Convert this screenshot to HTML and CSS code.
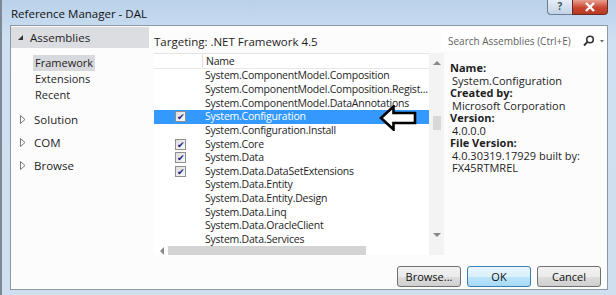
FILE: index.html
```html
<!DOCTYPE html>
<html lang="en">
<head>
    <meta charset="UTF-8">
    <title>Reference Manager - DAL</title>
    <link rel="stylesheet" href="styles.css">
</head>
<body>
    <div class="window">
        <div class="titlebar">
            <span class="title">Reference Manager - DAL</span>
            <div class="caption-buttons">
                <span class="btn-help">?</span>
                <span class="btn-close">
                    <svg width="14" height="10" viewBox="0 0 14 10"><path d="M3 1 L11 9 M11 1 L3 9" stroke="#fff" stroke-width="2.4"/></svg>
                </span>
            </div>
        </div>

        <div class="client">
            <div class="nav">
                <div class="nav-head"><span class="tri-open"></span>Assemblies</div>
                <div class="nav-sub">
                    <div class="nav-item selected">Framework</div>
                    <div class="nav-item">Extensions</div>
                    <div class="nav-item">Recent</div>
                </div>
                <div class="nav-group">
                    <svg class="tri-closed" width="6" height="9" viewBox="0 0 6 9"><path d="M0.5 0.5 L5 4.5 L0.5 8.5 Z" fill="#fff" stroke="#777"/></svg>Solution
                </div>
                <div class="nav-group">
                    <svg class="tri-closed" width="6" height="9" viewBox="0 0 6 9"><path d="M0.5 0.5 L5 4.5 L0.5 8.5 Z" fill="#fff" stroke="#777"/></svg>COM
                </div>
                <div class="nav-group">
                    <svg class="tri-closed" width="6" height="9" viewBox="0 0 6 9"><path d="M0.5 0.5 L5 4.5 L0.5 8.5 Z" fill="#fff" stroke="#777"/></svg>Browse
                </div>
            </div>

            <div class="main">
                <div class="top-row">
                    <span class="targeting">Targeting: .NET Framework 4.5</span>
                    <div class="search">
                        <span class="search-text">Search Assemblies (Ctrl+E)</span>
                        <svg width="26" height="12" viewBox="0 0 26 12">
                            <circle cx="9" cy="4.5" r="3.3" fill="none" stroke="#333" stroke-width="1.6"/>
                            <path d="M6.6 6.9 L3 10.5" stroke="#333" stroke-width="2"/>
                            <path d="M19 5 L23 5 L21 7.5 Z" fill="#666"/>
                        </svg>
                    </div>
                </div>

                <div class="middle">
                    <div class="list">
                        <div class="list-body">
                            <div class="list-head">
                                <span class="col-check"></span>
                                <span class="col-name">Name</span>
                            </div>
                            <div class="rows">
                                <div class="row"><span class="col-check"></span><span class="col-name">System.ComponentModel.Composition</span></div>
                                <div class="row"><span class="col-check"></span><span class="col-name">System.ComponentModel.Composition.Regist...</span></div>
                                <div class="row"><span class="col-check"></span><span class="col-name">System.ComponentModel.DataAnnotations</span></div>
                                <div class="row active"><span class="col-check"><span class="box">&#10004;</span></span><span class="col-name">System.Configuration</span></div>
                                <div class="row"><span class="col-check"></span><span class="col-name">System.Configuration.Install</span></div>
                                <div class="row"><span class="col-check"><span class="box">&#10004;</span></span><span class="col-name">System.Core</span></div>
                                <div class="row"><span class="col-check"><span class="box">&#10004;</span></span><span class="col-name">System.Data</span></div>
                                <div class="row"><span class="col-check"><span class="box">&#10004;</span></span><span class="col-name">System.Data.DataSetExtensions</span></div>
                                <div class="row"><span class="col-check"></span><span class="col-name">System.Data.Entity</span></div>
                                <div class="row"><span class="col-check"></span><span class="col-name">System.Data.Entity.Design</span></div>
                                <div class="row"><span class="col-check"></span><span class="col-name">System.Data.Linq</span></div>
                                <div class="row"><span class="col-check"></span><span class="col-name">System.Data.OracleClient</span></div>
                                <div class="row"><span class="col-check"></span><span class="col-name">System.Data.Services</span></div>
                            </div>
                            <div class="hscroll">
                                <span class="arrow-left"></span>
                                <span class="hthumb"></span>
                            </div>
                        </div>
                        <div class="vscroll">
                            <span class="arrow-up"></span>
                            <span class="vthumb"></span>
                            <span class="arrow-down"></span>
                        </div>

                        <!-- annotation arrow drawn over the list -->
                        <svg class="pointer" width="38" height="26" viewBox="0 0 38 26">
                            <path d="M2 13 L14.5 1.5 L14.5 8 L36 8 L36 18 L14.5 18 L14.5 24.5 Z" fill="#fff" stroke="#000" stroke-width="2.6" stroke-linejoin="miter"/>
                        </svg>
                    </div>

                    <div class="details">
                        <div class="d-label">Name:</div>
                        <div class="d-value">System.Configuration</div>
                        <div class="d-label">Created by:</div>
                        <div class="d-value">Microsoft Corporation</div>
                        <div class="d-label">Version:</div>
                        <div class="d-value">4.0.0.0</div>
                        <div class="d-label">File Version:</div>
                        <div class="d-value">4.0.30319.17929 built by:</div>
                        <div class="d-value">FX45RTMREL</div>
                    </div>
                </div>

                <div class="buttons">
                    <button>Browse...</button>
                    <button class="default">OK</button>
                    <button>Cancel</button>
                </div>
            </div>
        </div>
    </div>
</body>
</html>
```

FILE: styles.css
```css
body {
    margin: 0;
    font-family: "Open Sans", "Noto Sans", sans-serif;
    font-size: 11px;
    color: #1e1e1e;
    background: #c9dbef;
}

.window {
    width: 616px;
    height: 295px;
    box-sizing: border-box;
    border-left: 2px solid #7d8894;
    background: linear-gradient(to bottom, #b9d1ea 0, #cfe0f2 40px, #cfdff0 100%);
    display: flex;
    flex-direction: column;
}

.titlebar {
    height: 25px;
    display: flex;
    justify-content: space-between;
    align-items: flex-start;
    flex-shrink: 0;
}

.title {
    margin: 6px 0 0 9px;
    font-size: 11.5px;
    color: #111;
}

.caption-buttons {
    display: flex;
    margin-right: 8px;
}

.btn-help {
    width: 25px;
    height: 15px;
    box-sizing: border-box;
    border: 1px solid #6f7f92;
    border-right: none;
    border-top: none;
    border-radius: 0 0 0 4px;
    background: linear-gradient(to bottom, #e6eef7, #c3d3e6);
    text-align: center;
    font-size: 10px;
    font-weight: bold;
    line-height: 13px;
    color: #44505c;
}

.btn-close {
    width: 36px;
    height: 15px;
    box-sizing: border-box;
    border: 1px solid #6b2b24;
    border-top: none;
    border-radius: 0 0 4px 0;
    background: linear-gradient(to bottom, #e8a091, #c9452f 55%, #b83a24);
    display: flex;
    align-items: center;
    justify-content: center;
}

.client {
    flex: 1;
    margin: 0 8px 5px 8px;
    border: 1px solid #8a98a8;
    background: #fcfcfc;
    display: flex;
}

/* left navigation */
.nav {
    width: 140px;
    padding-top: 1px;
    flex-shrink: 0;
}

.nav-head {
    height: 21px;
    background: #dcdde0;
    display: flex;
    align-items: center;
    font-size: 11.5px;
    margin-right: 2px;
}

.tri-open {
    width: 0;
    height: 0;
    border-left: 5px solid transparent;
    border-bottom: 5px solid #333;
    margin: 0 7px 0 7px;
}

.tri-closed {
    margin: 0 8px 0 9px;
}

.nav-sub {
    padding: 7px 0 0 22px;
}

.nav-item {
    display: block;
    width: fit-content;
    height: 16px;
    line-height: 15px;
    padding: 0 2px;
}

.nav-item.selected {
    background: #d8d9dc;
}

.nav-group {
    display: flex;
    align-items: center;
    height: 16px;
    margin-top: 7px;
    font-size: 11.5px;
}

.nav-sub + .nav-group {
    margin-top: 8px;
}

/* main area */
.main {
    flex: 1;
    display: flex;
    flex-direction: column;
    padding-left: 3px;
}

.top-row {
    height: 27px;
    display: flex;
    justify-content: space-between;
    align-items: flex-start;
}

.targeting {
    margin-top: 8px;
    font-size: 11.5px;
}

.search {
    margin-top: 4px;
    width: 166px;
    height: 21px;
    background: #fff;
    display: flex;
    align-items: center;
    justify-content: space-between;
    padding: 0 0 0 7px;
    box-sizing: border-box;
}

.search-text {
    color: #5f5f5f;
    font-size: 10px;
}

.middle {
    display: flex;
    height: 202px;
}

.list {
    width: 290px;
    display: flex;
    position: relative;
    background: #fff;
}

.list-body {
    flex: 1;
    min-width: 0;
    display: flex;
    flex-direction: column;
    overflow: hidden;
}

.list-head {
    height: 14px;
    display: flex;
    align-items: center;
    border-top: 1px solid #e4e4e4;
    border-bottom: 1px solid #e8e8e8;
}

.list-head .col-check {
    height: 14px;
    border-right: 1px solid #e0e0e0;
}

.col-check {
    width: 47px;
    flex-shrink: 0;
    display: flex;
    justify-content: center;
    align-items: center;
    padding-right: 1px;
}

.col-name {
    padding-left: 3px;
    white-space: nowrap;
    font-size: 10.5px;
    letter-spacing: -0.22px;
}

.rows {
    flex: 1;
}

.row {
    height: 13.65px;
    display: flex;
    align-items: center;
    line-height: 13px;
}

.row.active {
    background: #3399ff;
    color: #fff;
}

.box {
    width: 11px;
    height: 11px;
    box-sizing: border-box;
    border: 1px solid #8f8f8f;
    background: linear-gradient(135deg, #dcdcdc, #fafafa);
    color: #21218a;
    font-size: 9px;
    line-height: 9px;
    text-align: center;
    margin-left: 6px;
}

.hscroll {
    height: 12px;
    display: flex;
    align-items: center;
    margin-bottom: 4px;
}

.arrow-left {
    width: 0;
    height: 0;
    border-top: 4px solid transparent;
    border-bottom: 4px solid transparent;
    border-right: 4px solid #888;
    margin: 0 4px 0 6px;
}

.hthumb {
    width: 198px;
    height: 9px;
    background: #d3d3d3;
}

.vscroll {
    width: 15px;
    flex-shrink: 0;
    background: #f3f3f3;
    display: flex;
    flex-direction: column;
    align-items: center;
    padding: 8px 0 18px;
    box-sizing: border-box;
}

.arrow-up {
    width: 0;
    height: 0;
    border-left: 4px solid transparent;
    border-right: 4px solid transparent;
    border-bottom: 4px solid #888;
}

.arrow-down {
    width: 0;
    height: 0;
    border-left: 4px solid transparent;
    border-right: 4px solid transparent;
    border-top: 4px solid #888;
    margin-top: auto;
}

.vthumb {
    width: 8px;
    height: 14px;
    background: #d8d8d8;
    margin-top: 51px;
}

.pointer {
    position: absolute;
    left: 225px;
    top: 52px;
}

.details {
    padding: 9px 0 0 6px;
    font-size: 11px;
    line-height: 12.5px;
}

.d-label {
    font-weight: bold;
}

.d-value {
    padding-left: 2px;
}

.buttons {
    display: flex;
    justify-content: flex-end;
    gap: 6px;
    margin-top: 11px;
    padding-right: 6px;
}

button {
    width: 64px;
    height: 21px;
    font-family: inherit;
    font-size: 11px;
    color: #111;
    border: 1px solid #707070;
    border-radius: 3px;
    background: linear-gradient(to bottom, #f2f2f2 0, #ebebeb 50%, #dddddd 51%, #cfcfcf 100%);
    padding: 0;
}

button.default {
    border-color: #3c7fb1;
    background: linear-gradient(to bottom, #eaf6fd 0, #d9f0fc 50%, #bee6fd 51%, #a7d9f5 100%);
}
```
